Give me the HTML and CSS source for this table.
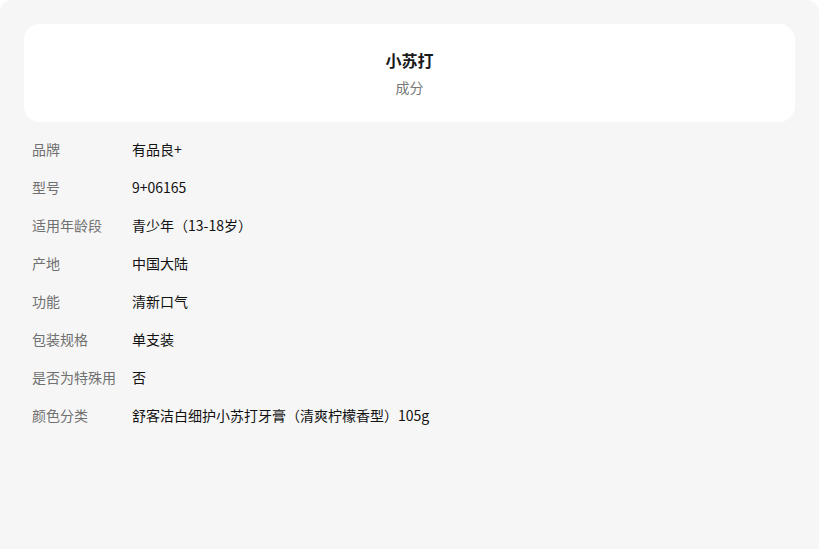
FILE: index.html
```html
<!DOCTYPE html>
<html lang="zh">
<head>
<meta charset="utf-8">
<link rel="stylesheet" href="styles.css">
</head>
<body>
<div class="panel">
  <div class="card">
    <div class="title">小苏打</div>
    <div class="subtitle">成分</div>
  </div>
  <div class="specs">
    <div class="row"><div class="label">品牌</div><div class="value">有品良+</div></div>
    <div class="row"><div class="label">型号</div><div class="value">9+06165</div></div>
    <div class="row"><div class="label">适用年龄段</div><div class="value">青少年（13-18岁）</div></div>
    <div class="row"><div class="label">产地</div><div class="value">中国大陆</div></div>
    <div class="row"><div class="label">功能</div><div class="value">清新口气</div></div>
    <div class="row"><div class="label">包装规格</div><div class="value">单支装</div></div>
    <div class="row"><div class="label">是否为特殊用</div><div class="value">否</div></div>
    <div class="row"><div class="label">颜色分类</div><div class="value">舒客洁白细护小苏打牙膏（清爽柠檬香型）105g</div></div>
  </div>
</div>
</body>
</html>
```

FILE: styles.css
```css
html, body {
  margin: 0;
  padding: 0;
  background: #ffffff;
}
body {
  font-family: "Noto Sans CJK SC", "Noto Sans", sans-serif;
  width: 819px;
  height: 550px;
  overflow: hidden;
}
.panel {
  box-sizing: border-box;
  width: 819px;
  height: 549px;
  background: #f6f6f6;
  border-radius: 12px 12px 0 0;
  padding: 24px;
}
.card {
  background: #ffffff;
  border-radius: 16px;
  height: 98px;
  box-sizing: border-box;
  padding-top: 25px;
  display: flex;
  flex-direction: column;
  align-items: center;
}
.title {
  font-size: 16px;
  font-weight: 700;
  color: #1a1a1a;
  line-height: 22px;
}
.subtitle {
  margin-top: 6px;
  font-size: 14px;
  color: #777777;
  line-height: 20px;
}
.specs {
  margin-top: 8px;
  display: flex;
  flex-direction: column;
}
.row {
  display: flex;
  align-items: center;
  height: 38px;
  padding-left: 8px;
  font-size: 14px;
}
.label {
  width: 100px;
  flex-shrink: 0;
  color: #707070;
}
.value {
  color: #111111;
}
```
